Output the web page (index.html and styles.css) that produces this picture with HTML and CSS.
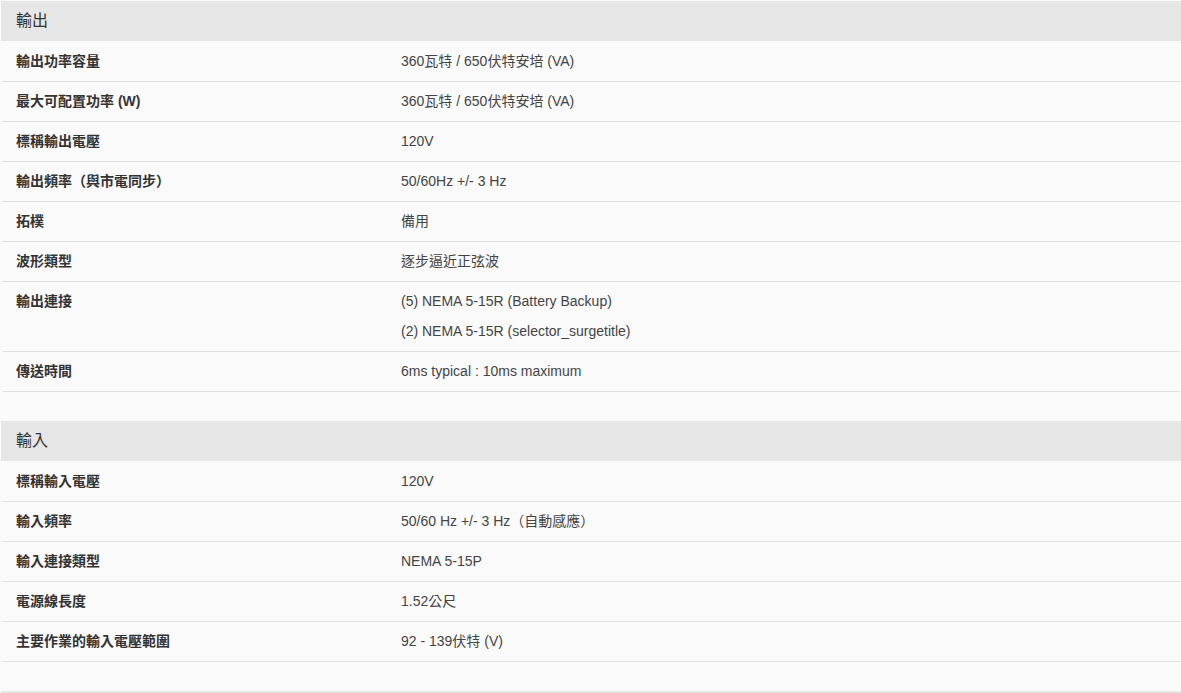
FILE: index.html
```html
<!DOCTYPE html>
<html lang="zh-Hant">
<head>
<meta charset="utf-8">
<title>規格</title>
<link rel="stylesheet" href="styles.css">
</head>
<body>
<section class="spec">
  <h2 class="spec-title">輸出</h2>
  <div class="row"><div class="label">輸出功率容量</div><div class="value"><p>360瓦特 / 650伏特安培 (VA)</p></div></div>
  <div class="row"><div class="label">最大可配置功率 (W)</div><div class="value"><p>360瓦特 / 650伏特安培 (VA)</p></div></div>
  <div class="row"><div class="label">標稱輸出電壓</div><div class="value"><p>120V</p></div></div>
  <div class="row"><div class="label">輸出頻率（與市電同步）</div><div class="value"><p>50/60Hz +/- 3 Hz</p></div></div>
  <div class="row"><div class="label">拓樸</div><div class="value"><p>備用</p></div></div>
  <div class="row"><div class="label">波形類型</div><div class="value"><p>逐步逼近正弦波</p></div></div>
  <div class="row"><div class="label">輸出連接</div><div class="value"><p>(5) NEMA 5-15R (Battery Backup)</p><p>(2) NEMA 5-15R (selector_surgetitle)</p></div></div>
  <div class="row"><div class="label">傳送時間</div><div class="value"><p>6ms typical : 10ms maximum</p></div></div>
</section>
<section class="spec">
  <h2 class="spec-title">輸入</h2>
  <div class="row"><div class="label">標稱輸入電壓</div><div class="value"><p>120V</p></div></div>
  <div class="row"><div class="label">輸入頻率</div><div class="value"><p>50/60 Hz +/- 3 Hz（自動感應）</p></div></div>
  <div class="row"><div class="label">輸入連接類型</div><div class="value"><p>NEMA 5-15P</p></div></div>
  <div class="row"><div class="label">電源線長度</div><div class="value"><p>1.52公尺</p></div></div>
  <div class="row"><div class="label">主要作業的輸入電壓範圍</div><div class="value"><p>92 - 139伏特 (V)</p></div></div>
</section>
<section class="spec">
  <h2 class="spec-title">&nbsp;</h2>
</section>
</body>
</html>
```
FILE: styles.css
```css
html, body {
  background: #fafafa;
}
body {
  margin: 0;
  padding: 1px 0 0 1px;
  font-family: "Liberation Sans", Arial, "Noto Sans CJK TC", sans-serif;
  font-size: 14px;
  color: #444;
}
.spec {
  margin-bottom: 29px;
}
.spec-title {
  margin: 0 0 1px;
  height: 40px;
  line-height: 40px;
  padding: 0 15px;
  background: #e6e6e6;
  font-size: 16px;
  font-weight: normal;
  color: #333;
}
.row {
  display: flex;
  margin: 0 1px;
  border-bottom: 1px solid #e2e2e2;
  padding: 9px 0 10px;
}
.label {
  width: 385px;
  padding-left: 14px;
  line-height: 20px;
  font-weight: bold;
  color: #333;
}
.value {
  flex: 1;
  display: flex;
  flex-direction: column;
  gap: 10px;
}
.value p {
  margin: 0;
  line-height: 20px;
  color: #444;
}
```
